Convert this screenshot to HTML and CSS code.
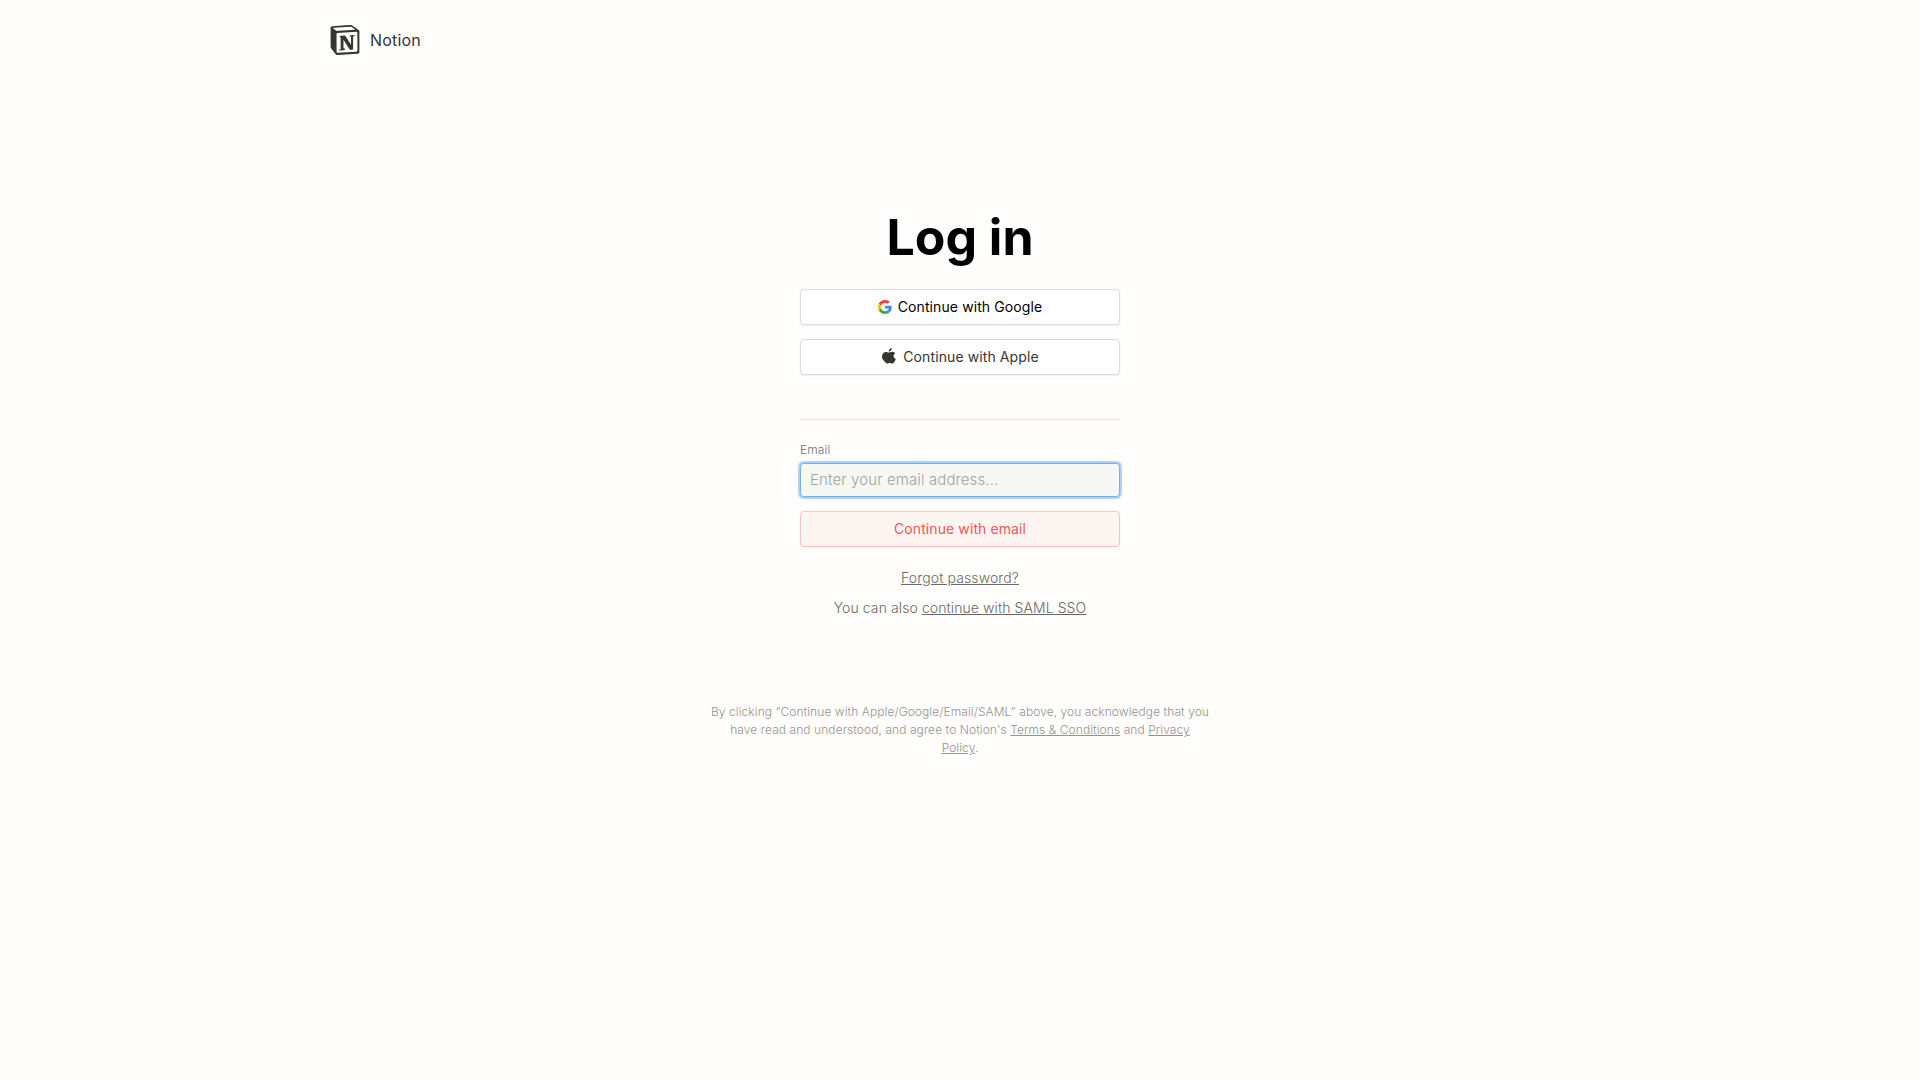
FILE: index.html
```html
<!DOCTYPE html>
<html lang="en">
<head>
<meta charset="utf-8">
<title>Log in | Notion</title>
<link rel="stylesheet" href="styles.css">
</head>
<body>
<header class="topbar">
  <a class="brand">
    <svg class="brand-logo" viewBox="0 0 24 24" aria-hidden="true"><path fill="#fff" d="M1.5 1.5 17 .8l5.8 4.2v17L5.5 23 1.200 18z"/><path fill="#37352f" d="M4.459 4.208c.746.606 1.026.56 2.428.466l13.215-.793c.28 0 .047-.28-.046-.326L17.86 1.968c-.42-.326-.981-.7-2.055-.607L3.01 2.295c-.466.046-.56.28-.374.466zm.793 3.08v13.904c0 .747.373 1.027 1.214.98l14.523-.84c.841-.046.935-.56.935-1.167V6.354c0-.606-.233-.933-.748-.887l-15.177.887c-.56.047-.747.327-.747.933zm14.337.745c.093.42 0 .84-.42.888l-.7.14v10.264c-.608.327-1.168.514-1.635.514-.748 0-.935-.234-1.495-.933l-4.577-7.186v6.952L12.21 19s0 1.168-1.635 1.168l-3.222.186c-.093-.186 0-.653.327-.746l.84-.233V9.854L7.822 9.76c-.094-.42.14-1.026.793-1.073l3.456-.233 4.764 7.279v-6.44l-1.215-.139c-.093-.514.28-.887.747-.933zM1.936 1.035l13.31-.98c1.634-.14 2.055-.047 3.082.7l4.249 2.986c.7.513.934.653.934 1.213v16.378c0 1.026-.373 1.634-1.68 1.726l-15.458.934c-.98.047-1.448-.093-1.962-.747l-3.129-4.06c-.56-.747-.793-1.306-.793-1.96V2.667c0-.839.374-1.54 1.447-1.632z"/></svg>
    <span>Notion</span>
  </a>
</header>
<main class="login">
  <h1 class="title">Log in</h1>
  <form class="form">
    <button type="button" class="btn btn-google">
      <svg class="google-icon" viewBox="0 0 48 48" aria-hidden="true">
        <path fill="#ea4335" d="M24 9.500c3.540 0 6.710 1.220 9.210 3.600l6.850-6.850C35.900 2.380 30.470 0 24 0 14.620 0 6.510 5.380 2.560 13.220l7.980 6.190C12.430 13.720 17.740 9.500 24 9.500z"/>
        <path fill="#4285f4" d="M46.980 24.550c0-1.570-.15-3.090-.38-4.550H24v9.020h12.940c-.58 2.960-2.260 5.480-4.780 7.180l7.730 6c4.510-4.180 7.090-10.360 7.090-17.650z"/>
        <path fill="#fbbc05" d="M10.530 28.590c-.48-1.450-.76-2.990-.76-4.590s.27-3.140.76-4.590l-7.980-6.190C.92 16.460 0 20.120 0 24s.92 7.540 2.560 10.780l7.970-6.190z"/>
        <path fill="#34a853" d="M24 48c6.480 0 11.930-2.130 15.890-5.810l-7.730-6c-2.150 1.450-4.920 2.300-8.160 2.300-6.260 0-11.570-4.220-13.470-9.910l-7.980 6.190C6.510 42.620 14.620 48 24 48z"/>
      </svg>
      <span class="btn-text">Continue with Google</span>
    </button>
    <button type="button" class="btn btn-apple">
      <svg class="apple-icon" viewBox="0 0 14 16" aria-hidden="true"><path fill="#37352f" d="M9.800 0c.1 1-.3 1.900-.9 2.600-.6.7-1.400 1.100-2.200 1-.1-.9.300-1.800.9-2.400C8.200.5 9.100.1 9.800 0zm3.400 5.400c-1 .6-1.600 1.500-1.600 2.600 0 1.400.9 2.500 2.200 3-.3 1-.8 2-1.500 2.900-.6.8-1.200 1.600-2.200 1.600-.9 0-1.300-.6-2.400-.6s-1.500.6-2.500.6c-1 0-1.700-.9-2.300-1.700C.9 12.200 0 10.400 0 8.500c0-3 1.900-4.600 3.900-4.600 1.100 0 2 .7 2.700.7.700 0 1.900-.8 3.200-.8 1.200 0 2.500.3 3.400 1.600z"/></svg>
      <span class="btn-text">Continue with Apple</span>
    </button>
    <hr class="divider">
    <label class="label" for="email">Email</label>
    <input class="input" id="email" type="email" placeholder="Enter your email address...">
    <button type="button" class="btn btn-email"><span class="btn-text">Continue with email</span></button>
  </form>
  <p class="hint"><a class="link">Forgot password?</a></p>
  <p class="hint hint-sso">You can also <a class="link">continue with SAML SSO</a></p>
  <p class="legal">By clicking “Continue with Apple/Google/Email/SAML” above, you acknowledge that you<br>have read and understood, and agree to Notion's <a class="link">Terms &amp; Conditions</a> and <a class="link">Privacy<br>Policy</a>.</p>
</main>
</body>
</html>
```
FILE: styles.css
```css
* { box-sizing: border-box; }
body {
  margin: 0;
  min-height: 100vh;
  background: #fffefc;
  color: #37352f;
  font-family: Inter, "Liberation Sans", sans-serif;
}
.topbar { height: 80px; padding: 0 330px; display: flex; align-items: center; }
.brand { display: flex; align-items: center; gap: 10px; font-size: 16px; letter-spacing: 0.18px; }
.brand-logo { width: 30px; height: 30px; }
.login { display: flex; flex-direction: column; align-items: center; padding-top: 127px; }
.title { margin: 0 0 22px; font-size: 50px; line-height: 60px; font-weight: 700; color: #000; }
.form { display: flex; flex-direction: column; width: 320px; }
.btn {
  display: flex;
  align-items: center;
  justify-content: center;
  height: 36px;
  margin: 0 0 14px;
  padding: 0 12px;
  border: 1px solid #dadada;
  border-radius: 4px;
  background: #fff;
  box-shadow: 0 1px 2px rgba(15, 15, 15, 0.06);
  font: 400 14px/17px Inter, sans-serif;
  letter-spacing: 0.1px;
  color: #37352f;
}
.btn-text { margin-top: -2px; }
.btn-google { gap: 6px; color: #000; }
.google-icon { width: 14px; height: 14px; }
.btn-apple { gap: 7px; }
.apple-icon { width: 14px; height: 16px; margin: -2px 0 0 1px; }
.btn-email { margin: 14px 0 0; color: #eb5757; background: #fdf5f2; border-color: #f7c4c0; }
.divider { width: 100%; height: 1px; margin: 30px 0 22px; border: 0; background: #dededd; }
.label { margin-bottom: 5px; font-size: 12px; font-weight: 300; line-height: 16px; letter-spacing: 0.12px; color: #73716c; }
.input {
  height: 34px;
  padding: 0 10px 2px;
  border: 0;
  border-radius: 4px;
  outline: 0;
  background: #f7f7f3;
  box-shadow: inset 0 0 0 1px #76aeea, 0 0 0 2px #b0d2f7;
  font: 300 15px/26px Inter, sans-serif;
  letter-spacing: 0.11px;
}
.input::placeholder { color: #a3a39f; opacity: 1; }
.hint { margin: 21px 0 0; font-size: 14px; font-weight: 300; line-height: 20px; letter-spacing: 0.12px; color: #6b6963; }
.hint-sso { margin-top: 10px; letter-spacing: 0.09px; }
.link { text-decoration: underline; }
.legal {
  width: 520px;
  margin: 85px 0 0;
  font-size: 12px;
  font-weight: 300;
  line-height: 18px;
  letter-spacing: 0.07px;
  text-align: center;
  color: #94938e;
}
```
